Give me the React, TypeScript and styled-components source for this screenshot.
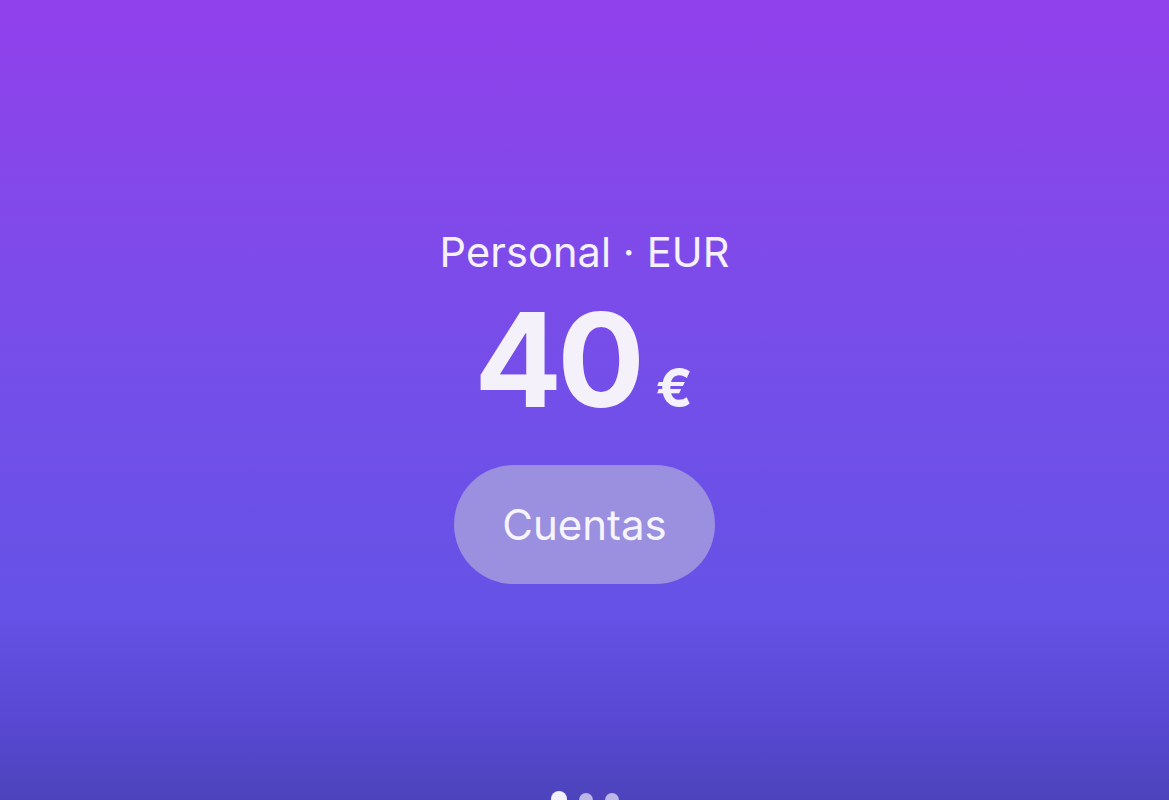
import React from "react";
import styled, { createGlobalStyle } from "styled-components";

const Global = createGlobalStyle`
  html, body { margin: 0; padding: 0; height: 100%; overflow: hidden; }
  body { font-family: Inter, "Noto Sans", sans-serif; }
`;

const Page = styled.div`
  height: 820px;
  display: flex;
  flex-direction: column;
  background: linear-gradient(
    180deg,
    #9140ea 0%,
    #8249ea 25%,
    #724fe8 50%,
    #6552e6 75%,
    #5848d2 88%,
    #4a42b5 100%
  );
  color: #f4f1fb;
`;

const Main = styled.main`
  flex: 1;
  display: flex;
  flex-direction: column;
  align-items: center;
  justify-content: flex-start;
  padding-top: 228px;
`;

const Label = styled.div`
  font-size: 41.5px;
  line-height: 48px;
  font-weight: 400;
  letter-spacing: 0.1px;
`;

const Amount = styled.div`
  display: flex;
  align-items: baseline;
  gap: 16px;
  margin-top: 9px;
  padding-right: 2px;
`;

const Value = styled.span`
  font-size: 130px;
  line-height: 150px;
  font-weight: 700;
  letter-spacing: -5px;
`;

const Currency = styled.span`
  font-size: 54px;
  font-weight: 700;
`;

const Pill = styled.button`
  margin-top: 30px;
  width: 261px;
  height: 119px;
  border: none;
  border-radius: 60px;
  background: #9b8fe0;
  color: #f6f4fc;
  font-family: Inter, "Noto Sans", sans-serif;
  font-size: 42px;
  font-weight: 400;
  cursor: pointer;
`;

const Dots = styled.div`
  height: 29px;
  display: flex;
  justify-content: center;
  align-items: flex-start;
  gap: 12px;
  padding-left: 1px;
`;

const Dot = styled.span<{ $active?: boolean }>`
  width: ${(p) => (p.$active ? 16 : 14)}px;
  height: ${(p) => (p.$active ? 16 : 14)}px;
  border-radius: 50%;
  background: ${(p) => (p.$active ? "#f2f0fb" : "rgba(235, 232, 250, 0.7)")};
  margin-top: ${(p) => (p.$active ? 0 : 2)}px;
`;

export default function App() {
  return (
    <>
      <Global />
      <Page>
        <Main>
          <Label>Personal · EUR</Label>
          <Amount>
            <Value>40</Value>
            <Currency>€</Currency>
          </Amount>
          <Pill>Cuentas</Pill>
        </Main>
        <Dots>
          <Dot $active />
          <Dot />
          <Dot />
        </Dots>
      </Page>
    </>
  );
}
